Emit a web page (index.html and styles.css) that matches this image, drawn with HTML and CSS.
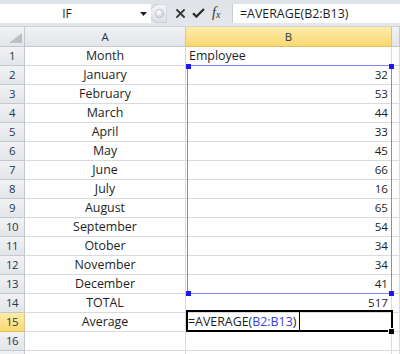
FILE: index.html
```html
<!DOCTYPE html>
<html>
<head>
<meta charset="utf-8">
<link rel="stylesheet" href="styles.css">
</head>
<body>
<div class="app">
  <div class="fbar">
    <div class="namebox">
      <span class="nb-text">IF</span>
      <svg class="nb-arrow" width="7" height="4" viewBox="0 0 7 4"><path d="M0 0H7L3.5 4Z" fill="#222"/></svg>
    </div>
    <svg class="grip" width="17" height="19" viewBox="0 0 17 19">
      <defs>
        <linearGradient id="gg" x1="0" y1="0" x2="0" y2="1">
          <stop offset="0" stop-color="#f4f5f7"/>
          <stop offset="1" stop-color="#dadde2"/>
        </linearGradient>
        <radialGradient id="gd" cx="0.4" cy="0.35" r="0.7">
          <stop offset="0" stop-color="#ffffff"/>
          <stop offset="1" stop-color="#c9cdd3"/>
        </radialGradient>
      </defs>
      <path d="M17 0H9.5A9.5 9.5 0 0 0 9.5 19H17Z" fill="url(#gg)" stroke="#c3c7cd" stroke-width="1"/>
      <circle cx="9.5" cy="9.5" r="4.2" fill="url(#gd)" stroke="#b9bec5" stroke-width="0.8"/>
    </svg>
    <div class="btns">
      <svg class="ico-x" width="9" height="9" viewBox="0 0 9 9"><path d="M1 1L8 8M8 1L1 8" stroke="#333" stroke-width="1.8" stroke-linecap="square"/></svg>
      <svg class="ico-ok" width="13" height="10" viewBox="0 0 13 10"><path d="M1 5.2L4.4 8.6L12 1" fill="none" stroke="#2b2b2b" stroke-width="2.2"/></svg>
      <span class="ico-fx"><i>f</i><sub>x</sub></span>
    </div>
    <div class="formula">=AVERAGE(B2:B13)</div>
  </div>

  <div class="sheet">
    <div class="hd corner"><svg width="13" height="10" viewBox="0 0 13 10"><path d="M13 0V10H0Z" fill="#bcc0c6"/></svg></div>
    <div class="hd colh">A</div>
    <div class="hd colh sel">B</div>
    <div class="hd colh"></div>

    <div class="hd rowh">1</div><div class="c ctr">Month</div><div class="c">Employee</div><div class="c"></div>
    <div class="hd rowh">2</div><div class="c ctr">January</div><div class="c num">32</div><div class="c"></div>
    <div class="hd rowh">3</div><div class="c ctr">February</div><div class="c num">53</div><div class="c"></div>
    <div class="hd rowh">4</div><div class="c ctr">March</div><div class="c num">44</div><div class="c"></div>
    <div class="hd rowh">5</div><div class="c ctr">April</div><div class="c num">33</div><div class="c"></div>
    <div class="hd rowh">6</div><div class="c ctr">May</div><div class="c num">45</div><div class="c"></div>
    <div class="hd rowh">7</div><div class="c ctr">June</div><div class="c num">66</div><div class="c"></div>
    <div class="hd rowh">8</div><div class="c ctr">July</div><div class="c num">16</div><div class="c"></div>
    <div class="hd rowh">9</div><div class="c ctr">August</div><div class="c num">65</div><div class="c"></div>
    <div class="hd rowh">10</div><div class="c ctr">September</div><div class="c num">54</div><div class="c"></div>
    <div class="hd rowh">11</div><div class="c ctr">Otober</div><div class="c num">34</div><div class="c"></div>
    <div class="hd rowh">12</div><div class="c ctr">November</div><div class="c num">34</div><div class="c"></div>
    <div class="hd rowh">13</div><div class="c ctr">December</div><div class="c num">41</div><div class="c"></div>
    <div class="hd rowh">14</div><div class="c ctr">TOTAL</div><div class="c num">517</div><div class="c"></div>
    <div class="hd rowh sel">15</div><div class="c ctr">Average</div><div class="c edit">=AVERAGE(<span class="ref">B2:B13</span>)</div><div class="c"></div>
    <div class="hd rowh">16</div><div class="c"></div><div class="c"></div><div class="c"></div>
    <div class="hd rowh"></div><div class="c"></div><div class="c"></div><div class="c"></div>

    <div class="range"></div>
    <div class="hdl h-tl"></div>
    <div class="hdl h-tr"></div>
    <div class="hdl h-bl"></div>
    <div class="hdl h-br"></div>
    <div class="active"></div>
    <div class="caret"></div>
    <div class="fill"></div>
  </div>
</div>
</body>
</html>
```

FILE: styles.css
```css
html, body {
  margin: 0;
  padding: 0;
  background: #ffffff;
}
.app {
  width: 400px;
  height: 354px;
  overflow: hidden;
  font-family: "Open Sans", "Liberation Sans", sans-serif;
  font-size: 12.4px;
  color: #1e1e1e;
}

/* formula bar */
.fbar {
  height: 27px;
  box-sizing: border-box;
  background: linear-gradient(#dfe3e8, #e4e7eb);
  padding-top: 4px;
  display: flex;
  align-items: flex-start;
  border-bottom: 1px solid #cfd3d8;
}
.namebox {
  width: 151px;
  height: 19px;
  background: #fff;
  display: flex;
  align-items: center;
  position: relative;
}
.nb-text {
  width: 134px;
  text-align: center;
  line-height: 19px;
  font-size: 12px;
}
.nb-arrow {
  margin-left: 6px;
}
.grip {
  display: block;
  margin-left: -1px;
}
.btns {
  width: 65px;
  height: 19px;
  display: flex;
  align-items: center;
  padding-left: 9px;
  box-sizing: border-box;
}
.ico-x { margin-right: 7px; }
.ico-ok { margin-right: 7px; margin-top: -1px; }
.ico-fx {
  font-family: "Liberation Serif", "DejaVu Serif", serif;
  font-size: 14px;
  color: #333;
  line-height: 19px;
}
.ico-fx i { font-style: italic; }
.ico-fx sub { font-size: 10px; font-style: italic; vertical-align: -1px; }
.formula {
  flex: 1;
  height: 19px;
  background: #fff;
  line-height: 19px;
  padding-left: 7px;
  white-space: nowrap;
  border-left: 1px solid #c9cdd3;
}

/* sheet */
.sheet {
  position: relative;
  display: grid;
  grid-template-columns: 25px 161px 206px 8px;
  grid-template-rows: 20px repeat(17, 19px);
}
.sheet > div {
  box-sizing: border-box;
}
.c {
  border-right: 1px solid #d9dadc;
  border-bottom: 1px solid #d9dadc;
  line-height: 18px;
  white-space: nowrap;
  overflow: hidden;
  padding: 0 3px;
}
.ctr { text-align: center; }
.num { text-align: right; font-size: 11.6px; }
.edit { padding-left: 2px; overflow: visible; }
.ref { color: #3a3af0; }

.hd {
  background: linear-gradient(#f1f2f4, #e2e5e9);
  border-right: 1px solid #c4c8cd;
  border-bottom: 1px solid #c4c8cd;
  color: #28384c;
  font-size: 11.4px;
  text-align: center;
}
.colh { line-height: 19px; }
.rowh { line-height: 18px; letter-spacing: -0.4px; }
.corner {
  display: flex;
  align-items: flex-end;
  justify-content: flex-end;
  padding: 0 2px 3px 0;
}
.corner svg { display: block; }
.hd.sel {
  background: linear-gradient(#fdeca8, #f9d873);
  border-bottom-color: #e8bf58;
  border-right-color: #d9c38a;
}

/* overlays */
.range {
  position: absolute;
  left: 187px;
  top: 38px;
  width: 205px;
  height: 229px;
  box-sizing: border-box;
  border: 1px solid #8383f7;
}
.hdl {
  position: absolute;
  width: 5px;
  height: 5px;
  background: #1a1af0;
}
.h-tl { left: 186px; top: 37px; }
.h-tr { left: 389px; top: 37px; }
.h-bl { left: 186px; top: 264px; }
.h-br { left: 389px; top: 264px; }
.active {
  position: absolute;
  left: 186px;
  top: 283px;
  width: 207px;
  height: 22px;
  box-sizing: border-box;
  border: 2px solid #000;
}
.caret {
  position: absolute;
  left: 299px;
  top: 285px;
  width: 1px;
  height: 18px;
  background: #000;
}
.fill {
  position: absolute;
  left: 389px;
  top: 302px;
  width: 5px;
  height: 5px;
  background: #000;
  box-shadow: -1px -1px 0 #fff;
}
```
